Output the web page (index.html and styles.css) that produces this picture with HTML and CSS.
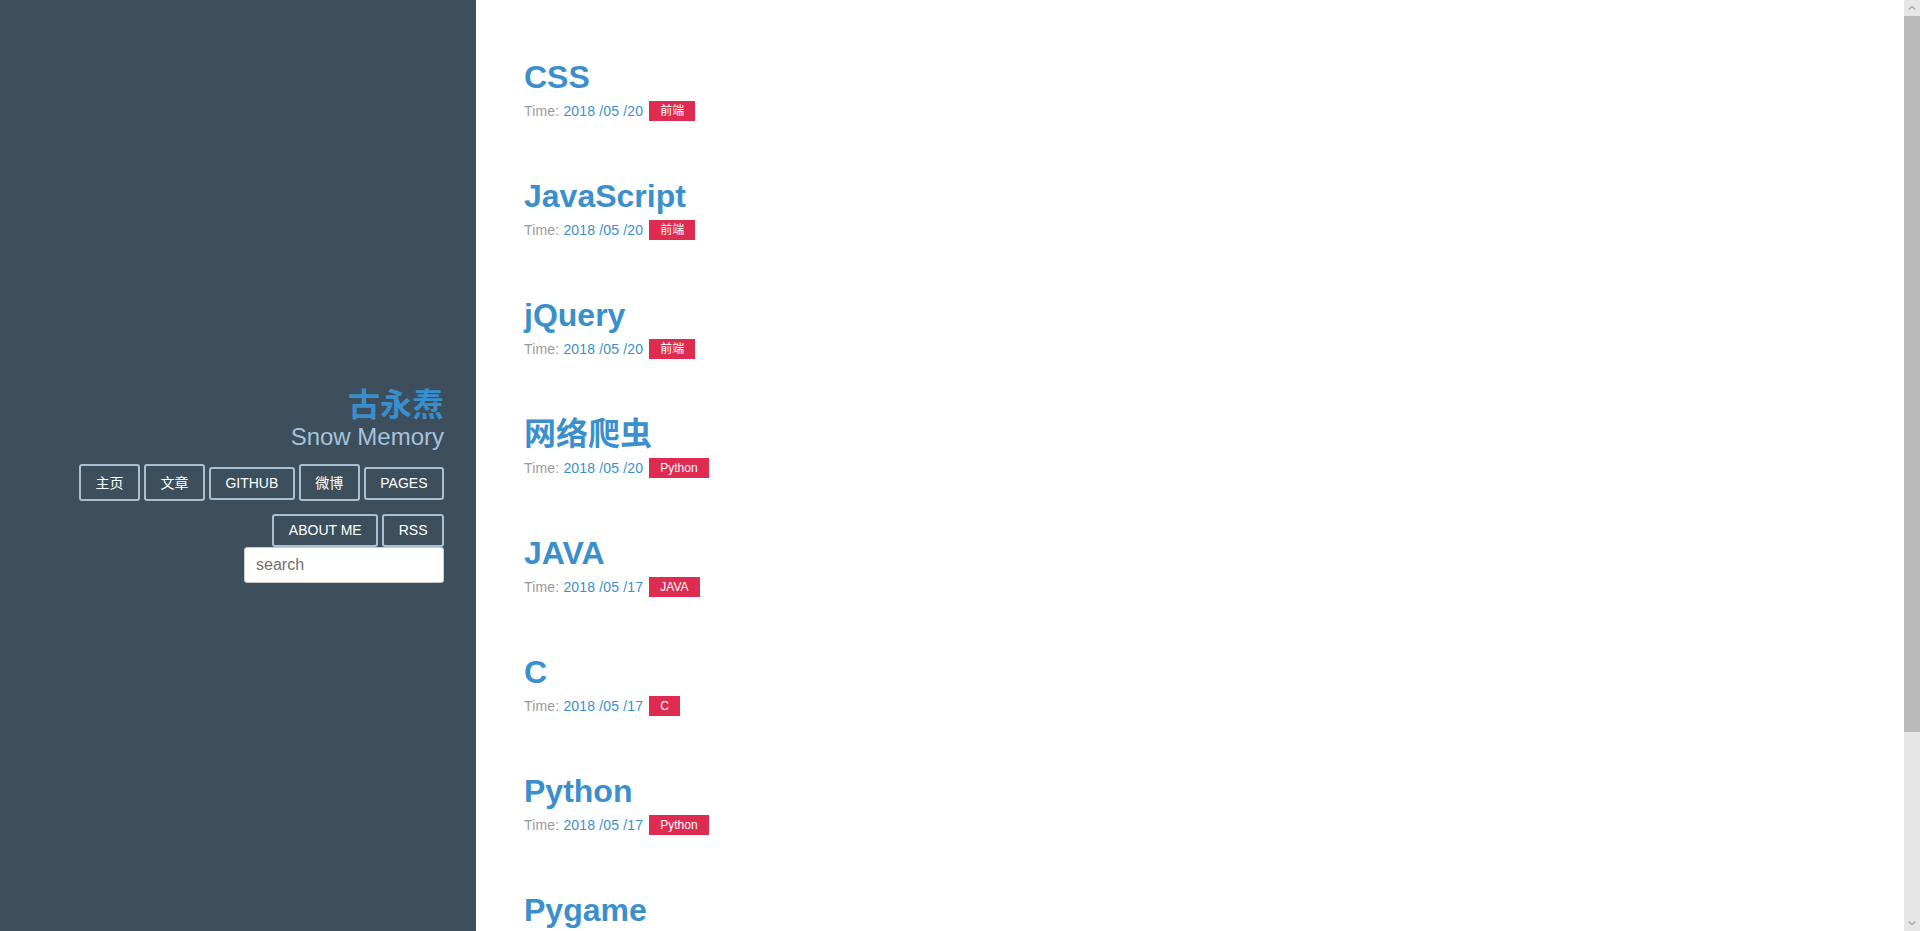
FILE: index.html
```html
<!DOCTYPE html>
<html lang="zh-CN">
<head>
<meta charset="utf-8">
<title>古永焘 - Snow Memory</title>
<link rel="stylesheet" href="styles.css">
</head>
<body>
<div class="page">
  <aside class="sidebar">
    <div class="brand">
      <h1 class="brand-title">古永焘</h1>
      <p class="brand-sub">Snow Memory</p>
    </div>
    <nav class="nav">
      <a class="nav-btn" href="#">主页</a>
      <a class="nav-btn" href="#">文章</a>
      <a class="nav-btn" href="#">GITHUB</a>
      <a class="nav-btn" href="#">微博</a>
      <a class="nav-btn" href="#">PAGES</a>
      <a class="nav-btn" href="#">ABOUT ME</a>
      <a class="nav-btn" href="#">RSS</a>
    </nav>
    <input class="search" type="text" placeholder="search">
  </aside>
  <main class="main">
    <article class="post">
      <h2 class="post-title"><a href="#">CSS</a></h2>
      <div class="meta"><span class="label">Time: </span><a class="date" href="#">2018 /05 /20</a><a class="tag" href="#">前端</a></div>
    </article>
    <article class="post">
      <h2 class="post-title"><a href="#">JavaScript</a></h2>
      <div class="meta"><span class="label">Time: </span><a class="date" href="#">2018 /05 /20</a><a class="tag" href="#">前端</a></div>
    </article>
    <article class="post">
      <h2 class="post-title"><a href="#">jQuery</a></h2>
      <div class="meta"><span class="label">Time: </span><a class="date" href="#">2018 /05 /20</a><a class="tag" href="#">前端</a></div>
    </article>
    <article class="post">
      <h2 class="post-title"><a href="#">网络爬虫</a></h2>
      <div class="meta"><span class="label">Time: </span><a class="date" href="#">2018 /05 /20</a><a class="tag" href="#">Python</a></div>
    </article>
    <article class="post">
      <h2 class="post-title"><a href="#">JAVA</a></h2>
      <div class="meta"><span class="label">Time: </span><a class="date" href="#">2018 /05 /17</a><a class="tag" href="#">JAVA</a></div>
    </article>
    <article class="post">
      <h2 class="post-title"><a href="#">C</a></h2>
      <div class="meta"><span class="label">Time: </span><a class="date" href="#">2018 /05 /17</a><a class="tag" href="#">C</a></div>
    </article>
    <article class="post">
      <h2 class="post-title"><a href="#">Python</a></h2>
      <div class="meta"><span class="label">Time: </span><a class="date" href="#">2018 /05 /17</a><a class="tag" href="#">Python</a></div>
    </article>
    <article class="post">
      <h2 class="post-title"><a href="#">Pygame</a></h2>
      <div class="meta"><span class="label">Time: </span><a class="date" href="#">2018 /05 /17</a><a class="tag" href="#">Python</a></div>
    </article>
  </main>
</div>
<div class="scrollbar" aria-hidden="true">
  <span class="sb-arrow">
    <svg width="16" height="16" viewBox="0 0 16 16"><polyline points="4.5,9.5 8,6.5 11.5,9.5" fill="none" stroke="#a3a3a3" stroke-width="1.2"/></svg>
  </span>
  <span class="sb-track"><span class="sb-thumb"></span></span>
  <span class="sb-arrow">
    <svg width="16" height="16" viewBox="0 0 16 16"><polyline points="4.5,6.5 8,9.5 11.5,6.5" fill="none" stroke="#a3a3a3" stroke-width="1.2"/></svg>
  </span>
</div>
</body>
</html>
```

FILE: styles.css
```css
html, body {
  margin: 0;
  padding: 0;
}

body {
  font-family: "Liberation Sans", Arial, "Noto Sans CJK SC", sans-serif;
  background: #ffffff;
  color: #333333;
}

a {
  text-decoration: none;
}

.page {
  display: flex;
  align-items: flex-start;
  margin-right: 16px;
}

.sidebar {
  flex: 0 0 25%;
  box-sizing: border-box;
  height: 100vh;
  position: sticky;
  top: 0;
  background: #3d4f5d;
  display: flex;
  flex-direction: column;
  justify-content: center;
  align-items: flex-end;
  padding: 40px 32px 0 32px;
  text-align: right;
}

.brand-title {
  margin: 0;
  font-size: 32px;
  line-height: 1.1;
  font-weight: bold;
  color: #3a8ecb;
}

.brand-sub {
  margin: 1px 0 0;
  font-size: 24px;
  line-height: 1.1;
  color: #a5c2db;
}

.nav {
  margin-top: 13px;
  display: flex;
  flex-wrap: wrap;
  justify-content: flex-end;
  align-items: baseline;
  gap: 13px 4px;
}

.nav-btn {
  display: inline-block;
  border: 2px solid #a8c0d4;
  border-radius: 3px;
  padding: 6px 14.5px 7px;
  color: #ffffff;
  font-size: 14px;
}

.search {
  box-sizing: border-box;
  width: 200px;
  height: 36px;
  margin: 0;
  padding: 6px 8px 6px 11px;
  border: 1px solid #cccccc;
  border-radius: 3px;
  background: #ffffff;
  font-family: "Liberation Sans", Arial, sans-serif;
  font-size: 16px;
  color: #555555;
}

.search::placeholder {
  color: #707070;
}

.main {
  flex: 1;
  padding: 59px 0 151px 48px;
}

.post {
  margin-bottom: 57px;
}

.post-title {
  margin: 0;
  font-size: 32px;
  line-height: 36px;
  height: 36px;
  font-weight: bold;
}

.post-title a {
  color: #3b8fcc;
}

.meta {
  margin-top: 6px;
  height: 20px;
  font-size: 14px;
  line-height: 20px;
  white-space: nowrap;
}

.label {
  color: #9a9a9a;
  letter-spacing: 0.17px;
}

.date {
  color: #3b8fcc;
  letter-spacing: 0.17px;
}

.tag {
  display: inline-block;
  vertical-align: top;
  margin-left: 6px;
  padding: 0 11px;
  height: 20px;
  line-height: 20px;
  font-size: 12px;
  color: #ffffff;
  background: #e02b50;
}

/* browser scrollbar as it appears in the reference */
.scrollbar {
  position: fixed;
  top: 0;
  right: 0;
  bottom: 0;
  width: 16px;
  display: flex;
  flex-direction: column;
  background: #e6e6e6;
}

.sb-arrow {
  flex: 0 0 16px;
  display: flex;
  align-items: center;
  justify-content: center;
}

.sb-track {
  flex: 1;
  display: flex;
  flex-direction: column;
}

.sb-thumb {
  height: 716px;
  background: #b9b9b9;
}
```
